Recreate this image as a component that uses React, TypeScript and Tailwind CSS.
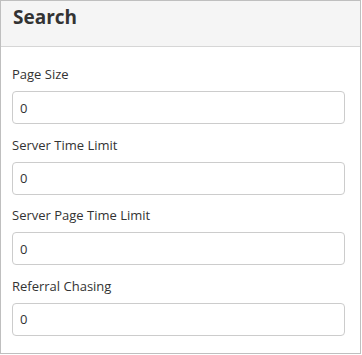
import React from "react";

const fields = ["Page Size", "Server Time Limit", "Server Page Time Limit", "Referral Chasing"];

export default function App() {
  return (
    <div
      className="w-[361px] h-[354px] border border-[#bfbfbf] bg-white box-border flex flex-col"
      style={{ fontFamily: '"Open Sans", "Liberation Sans", sans-serif' }}
    >
      <div className="h-[46px] shrink-0 bg-[#f5f5f5] border-b border-[#d6d6d6] flex items-start px-[12px] pt-[3px]">
        <h1 className="text-[19px] leading-[26px] font-bold text-[#333333]">Search</h1>
      </div>
      <div className="pl-[11px] pr-[15px] pt-[18px]">
        {fields.map((f) => (
          <div key={f} className="mb-[11.5px]">
            <div className="text-[13px] leading-[18px] text-[#333333] mb-[8px]">{f}</div>
            <input
              readOnly
              value="0"
              className="block w-full h-[33px] border border-[#cccccc] rounded-[4px] px-[7px] text-[13px] text-[#333333] bg-white outline-none"
              style={{ fontFamily: '"Open Sans", "Liberation Sans", sans-serif' }}
            />
          </div>
        ))}
      </div>
    </div>
  );
}
